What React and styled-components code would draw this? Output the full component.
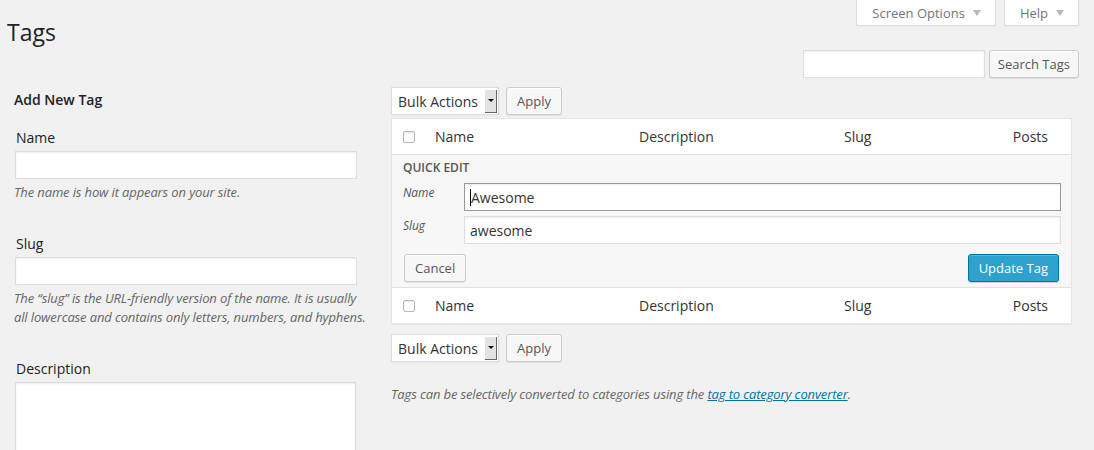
import React from "react";
import styled, { createGlobalStyle } from "styled-components";

const Global = createGlobalStyle`
  html, body {
    margin: 0;
    padding: 0;
    background: #f1f1f1;
  }
  body {
    font-family: "Open Sans", "Liberation Sans", sans-serif;
    color: #444;
    font-size: 13px;
  }
  * { box-sizing: border-box; }
`;

const Page = styled.div`
  width: 1094px;
  height: 450px;
  overflow: hidden;
`;

const Header = styled.div`
  display: flex;
  justify-content: space-between;
  align-items: flex-start;
  padding: 0 15px 0 7px;
`;

const Title = styled.h2`
  margin: 0;
  padding-top: 18px;
  font-size: 23px;
  line-height: 29px;
  font-weight: 400;
  color: #222;
`;

const HeaderRight = styled.div`
  display: flex;
  flex-direction: column;
  align-items: flex-end;
`;

const MetaTabs = styled.div`
  display: flex;
  gap: 8px;
`;

const Tab = styled.div`
  height: 26px;
  padding: 0 14px 0 15px;
  display: flex;
  align-items: center;
  gap: 8px;
  background: #fff;
  border: 1px solid #ddd;
  border-top: none;
  box-shadow: 0 1px 1px -1px rgba(0, 0, 0, 0.1);
  color: #72777c;
  font-size: 13px;
`;

const Caret = styled.span`
  width: 0;
  height: 0;
  border-left: 4px solid transparent;
  border-right: 4px solid transparent;
  border-top: 6px solid #b4b9be;
  margin-top: 1px;
`;

const SearchBox = styled.div`
  display: flex;
  gap: 4px;
  margin-top: 24px;
`;

const TextBox = styled.div`
  width: ${(p) => p.$w || "100%"};
  height: ${(p) => p.$h || 28}px;
  background: #fff;
  border: 1px solid ${(p) => (p.$focus ? "#999" : "#ddd")};
  box-shadow: inset 0 1px 2px rgba(0, 0, 0, 0.07);
  display: flex;
  align-items: center;
  padding: 0 5px;
  font-size: 14px;
  color: #333;
`;

const TextCaret = styled.span`
  width: 1px;
  height: 17px;
  background: #000;
`;

const Button = styled.div`
  height: 28px;
  padding: 0 ${(p) => p.$pad ?? 10}px;
  display: inline-flex;
  align-items: center;
  border-radius: 3px;
  font-size: 13px;
  border: 1px solid ${(p) => (p.$primary ? "#0074a2" : "#ccc")};
  background: ${(p) => (p.$primary ? "#2ea2cc" : "#f7f7f7")};
  color: ${(p) => (p.$primary ? "#fff" : "#555")};
  box-shadow: ${(p) =>
    p.$primary
      ? "inset 0 1px 0 rgba(120,200,230,.5), 0 1px 0 rgba(0,0,0,.15)"
      : "inset 0 1px 0 #fff, 0 1px 0 rgba(0,0,0,.08)"};
  white-space: nowrap;
`;

const Columns = styled.div`
  display: flex;
  padding: 9px 22px 0 0;
`;

const LeftCol = styled.div`
  width: 391px;
  flex: none;
  padding: 0 22px 0 14px;
`;

const RightCol = styled.div`
  flex: 1;
`;

const FormTitle = styled.h3`
  margin: 3px 0 0;
  font-size: 14px;
  line-height: 20px;
  font-weight: 600;
  color: #222;
`;

const FormField = styled.div`
  margin-top: ${(p) => p.$mt}px;
`;

const Label = styled.div`
  font-size: 14px;
  line-height: 20px;
  color: #222;
  padding-left: 2px;
  margin-bottom: 3px;
`;

const FieldInput = styled(TextBox)`
  margin-left: 1px;
  width: 342px;
`;

const TextArea = styled.div`
  margin-left: 1px;
  width: 341px;
  height: 94px;
  background: #fff;
  border: 1px solid #ddd;
  box-shadow: inset 0 1px 2px rgba(0, 0, 0, 0.07);
`;

const Help = styled.p`
  margin: 4px 0 0;
  font-size: 13px;
  line-height: 19px;
  font-style: italic;
  letter-spacing: -0.13px;
  color: #666;
`;

const ActionsBar = styled.div`
  display: flex;
  gap: 7px;
  align-items: center;
`;

const Select = styled.div`
  width: 108px;
  height: 28px;
  background: #fff;
  border: 1px solid #ddd;
  display: flex;
  align-items: center;
  justify-content: space-between;
  padding: 0 1px 0 6px;
  font-size: 14px;
  color: #333;
  box-shadow: 0 1px 2px rgba(0, 0, 0, 0.04);
`;

const SelectArrow = styled.span`
  width: 12px;
  height: 23px;
  background: #e3e3e3;
  border-right: 1px solid #666;
  border-bottom: 1px solid #666;
  display: flex;
  align-items: center;
  justify-content: center;
  &::after {
    content: "";
    border-left: 3px solid transparent;
    border-right: 3px solid transparent;
    border-top: 3px solid #111;
  }
`;

const Table = styled.div`
  margin-top: 3px;
  background: #fff;
  border: 1px solid #e5e5e5;
  box-shadow: 0 1px 1px rgba(0, 0, 0, 0.04);
`;

const HeadRow = styled.div`
  display: grid;
  grid-template-columns: 43px 204px 205px 1fr 90px;
  align-items: center;
  height: ${(p) => (p.$last ? 35 : 36)}px;
  border-bottom: ${(p) => (p.$last ? "none" : "1px solid #e1e1e1")};
  font-size: 14px;
  color: #333;
`;

const CheckCell = styled.div`
  padding-left: 11px;
  display: flex;
  align-items: center;
`;

const Checkbox = styled.span`
  width: 12px;
  height: 12px;
  border: 1px solid #b4b9be;
  border-radius: 2px;
  background: #fff;
  box-shadow: inset 0 1px 2px rgba(0, 0, 0, 0.1);
`;

const HeadCell = styled.div`
  text-align: ${(p) => (p.$right ? "right" : "left")};
  padding-right: ${(p) => (p.$right ? 23 : 0)}px;
`;

const QuickEdit = styled.div`
  background: #f7f7f7;
  border-bottom: 1px solid #e1e1e1;
  padding: 3px 10px 5px 11px;
`;

const Legend = styled.div`
  font-size: 12px;
  line-height: 20px;
  font-weight: 600;
  text-transform: uppercase;
  color: #555;
`;

const EditField = styled.div`
  display: flex;
  align-items: flex-start;
  margin-top: 5px;
`;

const EditLabel = styled.span`
  width: 61px;
  flex: none;
  font-size: 12px;
  line-height: 20px;
  font-style: italic;
  letter-spacing: -0.1px;
  color: #555;
`;

const EditButtons = styled.div`
  display: flex;
  justify-content: space-between;
  margin-top: 10px;
  padding: 0 2px 0 1px;
`;

const BottomBar = styled(ActionsBar)`
  margin-top: 10px;
`;

const Note = styled.p`
  margin: 23px 0 0;
  font-size: 13px;
  line-height: 19px;
  font-style: italic;
  letter-spacing: -0.13px;
  color: #666;
`;

const Link = styled.a`
  color: #0074a2;
  text-decoration: underline;
`;

function TableHead({ last }) {
  return (
    <HeadRow $last={last}>
      <CheckCell>
        <Checkbox />
      </CheckCell>
      <HeadCell>Name</HeadCell>
      <HeadCell>Description</HeadCell>
      <HeadCell>Slug</HeadCell>
      <HeadCell $right>Posts</HeadCell>
    </HeadRow>
  );
}

function Bulk({ as: Bar = ActionsBar }) {
  return (
    <Bar>
      <Select>
        Bulk Actions
        <SelectArrow />
      </Select>
      <Button>Apply</Button>
    </Bar>
  );
}

export default function App() {
  return (
    <Page>
      <Global />
      <Header>
        <Title>Tags</Title>
        <HeaderRight>
          <MetaTabs>
            <Tab>
              Screen Options <Caret />
            </Tab>
            <Tab>
              Help <Caret />
            </Tab>
          </MetaTabs>
          <SearchBox>
            <TextBox $w="182px" />
            <Button $pad={8}>Search Tags</Button>
          </SearchBox>
        </HeaderRight>
      </Header>

      <Columns>
        <LeftCol>
          <FormTitle>Add New Tag</FormTitle>
          <FormField $mt={18}>
            <Label>Name</Label>
            <FieldInput />
            <Help>The name is how it appears on your site.</Help>
          </FormField>
          <FormField $mt={32}>
            <Label>Slug</Label>
            <FieldInput />
            <Help>
              The “slug” is the URL-friendly version of the name. It is usually
              all lowercase and contains only letters, numbers, and hyphens.
            </Help>
          </FormField>
          <FormField $mt={32}>
            <Label>Description</Label>
            <TextArea />
          </FormField>
        </LeftCol>

        <RightCol>
          <Bulk />
          <Table>
            <TableHead />
            <QuickEdit>
              <Legend>Quick Edit</Legend>
              <EditField>
                <EditLabel>Name</EditLabel>
                <TextBox $focus>
                  <TextCaret />
                  Awesome
                </TextBox>
              </EditField>
              <EditField>
                <EditLabel>Slug</EditLabel>
                <TextBox>awesome</TextBox>
              </EditField>
              <EditButtons>
                <Button>Cancel</Button>
                <Button $primary>Update Tag</Button>
              </EditButtons>
            </QuickEdit>
            <TableHead last />
          </Table>
          <Bulk as={BottomBar} />
          <Note>
            Tags can be selectively converted to categories using the{" "}
            <Link href="#">tag to category converter</Link>.
          </Note>
        </RightCol>
      </Columns>
    </Page>
  );
}
